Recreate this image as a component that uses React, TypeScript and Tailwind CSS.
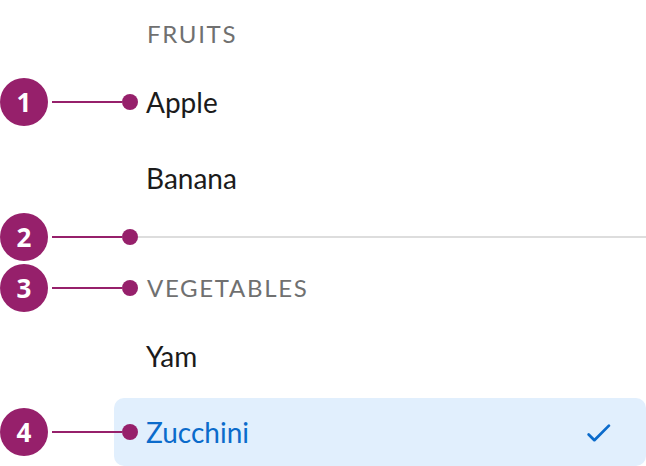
import React from "react";

type RowProps = {
  n?: number;
  h: string;
  mt?: string;
  selected?: boolean;
  children?: React.ReactNode;
};

function Badge({ n }: { n: number }) {
  return (
    <div className="w-12 h-12 shrink-0 rounded-full bg-[#96206b] text-white flex items-center justify-center text-[26px] font-bold leading-none font-['Open_Sans',sans-serif]">
      {n}
    </div>
  );
}

function Row({ n, h, mt = "", selected = false, children }: RowProps) {
  return (
    <div className={`flex ${h} ${mt}`}>
      <div className="w-[114px] shrink-0 flex items-center">
        {n ? (
          <>
            <Badge n={n} />
            <div className="ml-1 h-[2px] flex-1 bg-[#96206b]" />
          </>
        ) : null}
      </div>
      <div
        className={`flex-1 flex items-center ${
          selected ? "bg-[#e1effd] rounded-[10px]" : ""
        }`}
      >
        <div className={`w-2 h-[2px] shrink-0 ${n ? "bg-[#96206b]" : ""}`} />
        <div className={`w-4 h-4 shrink-0 rounded-full ${n ? "bg-[#96206b]" : ""}`} />
        {children}
      </div>
    </div>
  );
}

function Header({ children }: { children: React.ReactNode }) {
  return (
    <span className="ml-[9px] text-[24px] tracking-[0.07em] text-[#707070] leading-none uppercase">
      {children}
    </span>
  );
}

function Item({ children, selected = false }: { children: React.ReactNode; selected?: boolean }) {
  return (
    <span
      className={`ml-[8px] text-[28px] leading-none ${
        selected ? "text-[#0b6bcb]" : "text-[#1b1b1b]"
      }`}
    >
      {children}
    </span>
  );
}

export default function App() {
  return (
    <div className="w-[646px] h-[466px] bg-white overflow-hidden font-['Lato',sans-serif] flex flex-col">
      <Row h="h-[68px]">
        <Header>Fruits</Header>
      </Row>
      <Row n={1} h="h-[68px]">
        <Item>Apple</Item>
      </Row>
      <Row h="h-[68px]" mt="mt-2">
        <Item>Banana</Item>
      </Row>
      <div className="flex h-[50px] items-center">
        <div className="w-[114px] shrink-0 flex items-center">
          <Badge n={2} />
          <div className="ml-1 h-[2px] flex-1 bg-[#96206b]" />
        </div>
        <div className="flex-1 flex items-center">
          <div className="w-2 h-[2px] shrink-0 bg-[#96206b]" />
          <div className="w-4 h-4 shrink-0 rounded-full bg-[#96206b]" />
          <div className="flex-1 h-[2px] bg-[#dddddd]" />
        </div>
      </div>
      <Row n={3} h="h-[52px]">
        <Header>Vegetables</Header>
      </Row>
      <Row h="h-[68px]" mt="mt-2">
        <Item>Yam</Item>
      </Row>
      <Row n={4} h="h-[68px]" mt="mt-2" selected>
        <Item selected>Zucchini</Item>
        <svg
          className="ml-auto mr-[31px] w-[33px] h-[33px] shrink-0"
          viewBox="0 0 24 24"
          fill="#0b6bcb"
        >
          <path d="M9 16.17 5.53 12.7a.9959.9959 0 0 0-1.41 0c-.39.39-.39 1.02 0 1.41l4.18 4.18c.39.39 1.02.39 1.41 0L20.29 7.71c.39-.39.39-1.02 0-1.41a.9959.9959 0 0 0-1.41 0L9 16.17z" />
        </svg>
      </Row>
    </div>
  );
}
